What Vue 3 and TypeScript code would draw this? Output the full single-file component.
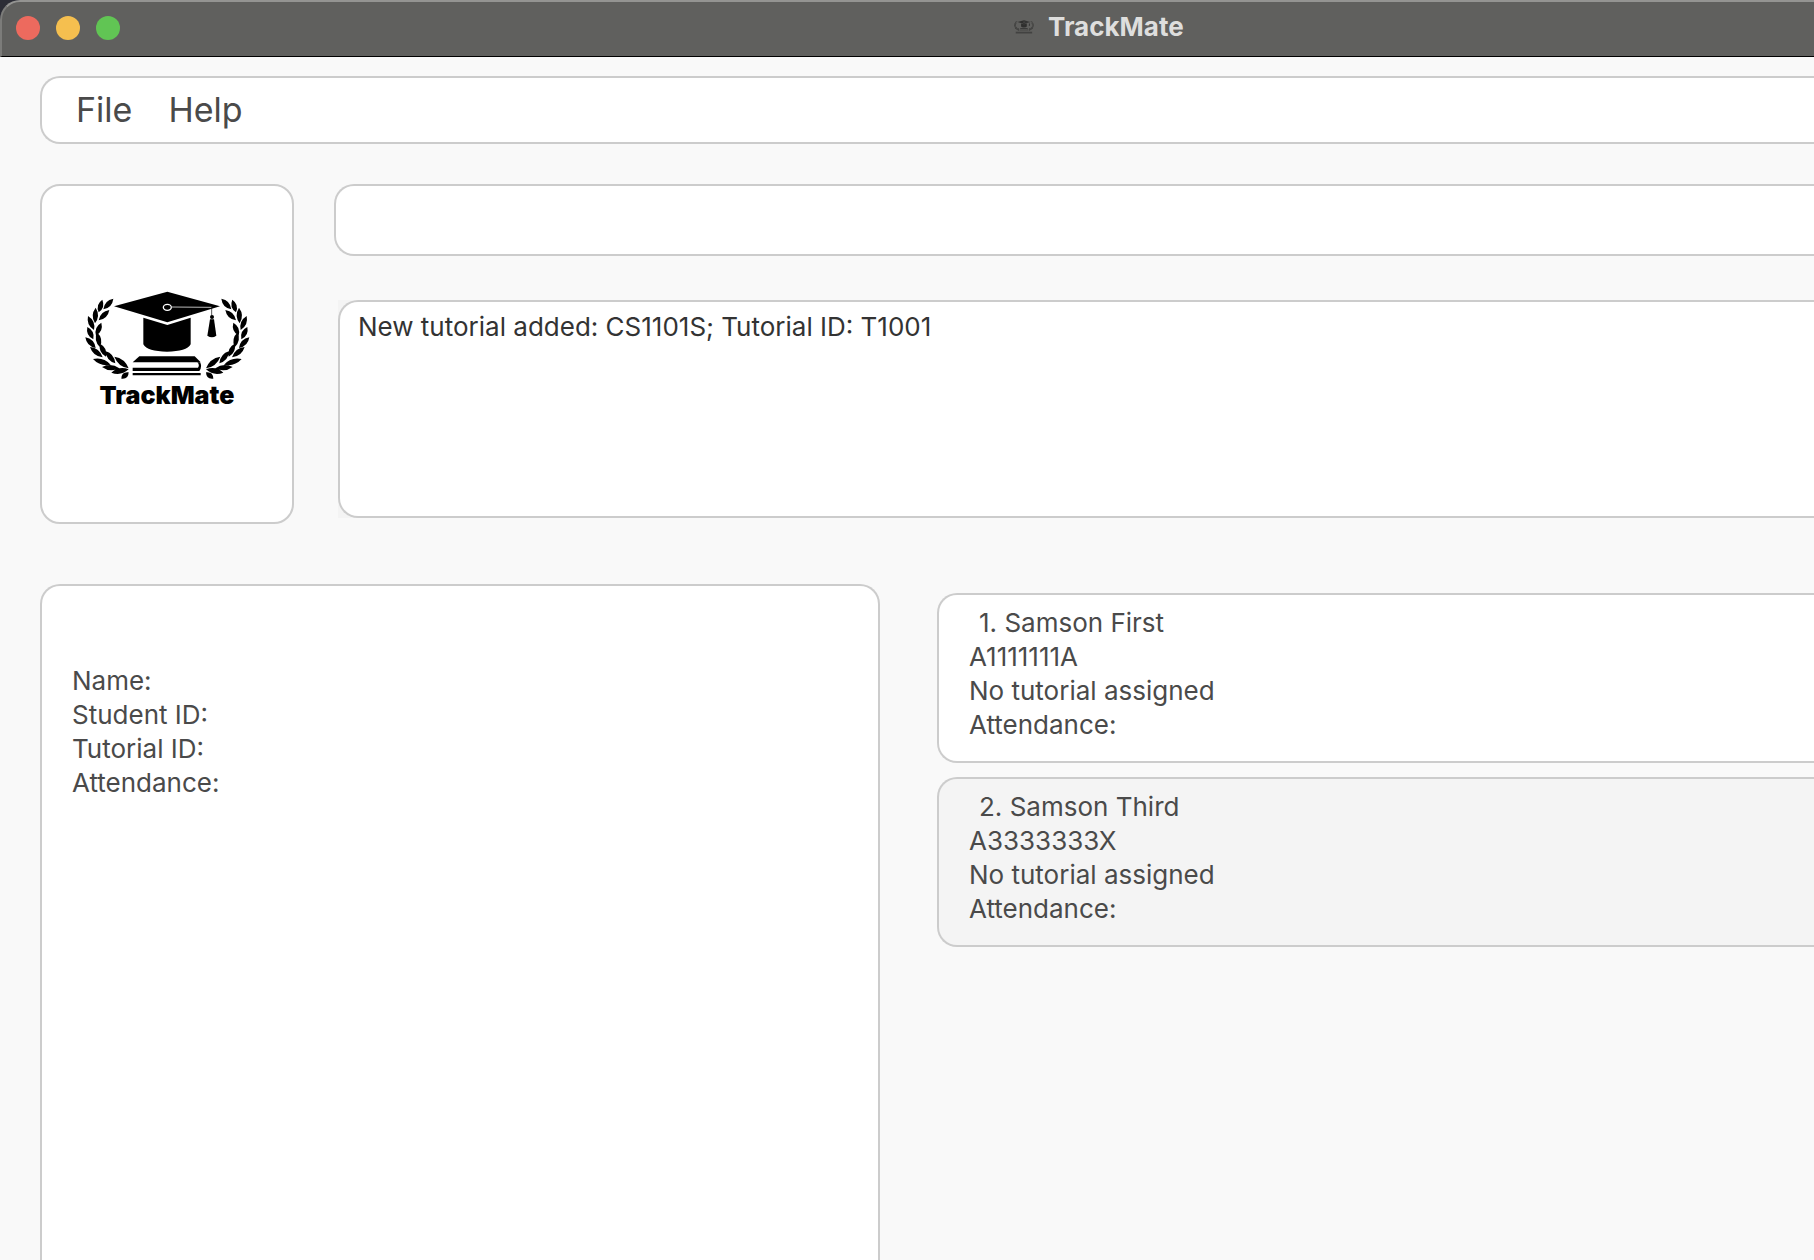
<script setup lang="ts">
import { ref } from 'vue'

interface Student {
  name: string
  studentId: string
  tutorial: string
  attendance: string
}

type Leaf = [number, number, number, number]

const command = ref('')
const result = ref('New tutorial added: CS1101S; Tutorial ID: T1001')

const menus = ['File', 'Help']
const fields = ['Name:', 'Student ID:', 'Tutorial ID:', 'Attendance:']

const students: Student[] = [
  { name: 'Samson First', studentId: 'A1111111A', tutorial: 'No tutorial assigned', attendance: '' },
  { name: 'Samson Third', studentId: 'A3333333X', tutorial: 'No tutorial assigned', attendance: '' },
]

// Laurel leaves, each given by its two tips
const leaves: Leaf[] = [
  [100, 121, 130, 89],
  [86, 130, 97, 92],
  [86, 154, 118, 123],
  [75, 163, 77, 116],
  [72, 183, 54, 141],
  [78, 200, 94, 161],
  [70, 211, 52, 174],
  [90, 235, 81, 190],
  [77, 237, 46, 205],
  [108, 263, 90, 224],
  [98, 265, 60, 234],
  [136, 283, 106, 246],
  [122, 287, 69, 270],
  [176, 298, 133, 263],
  [148, 298, 96, 294],
  [176, 301, 124, 311],
  [154, 329, 176, 310],
]

const leafPath = ([x1, y1, x2, y2]: Leaf): string => {
  const len = Math.hypot(x2 - x1, y2 - y1)
  const px = (-(y2 - y1) / len) * 16
  const py = ((x2 - x1) / len) * 16
  const mx = (x1 + x2) / 2
  const my = (y1 + y2) / 2
  return `M${x1} ${y1}Q${mx + px} ${my + py} ${x2} ${y2}Q${mx - px} ${my - py} ${x1} ${y1}Z`
}

const laurel = leaves.map(leafPath).join('')
</script>

<template>
  <div class="window">
    <svg class="defs" aria-hidden="true">
      <defs>
        <g id="trackmate-emblem">
          <path :d="laurel" />
          <path :d="laurel" transform="translate(584 0) scale(-1 1)" />
          <path d="M132 112 292 68 450 112 292 160Z" />
          <path d="M220 146 292 168 362 146V226Q350 248 291 248 232 248 220 226Z" />
          <ellipse class="ring" cx="292" cy="115" rx="12" ry="9" />
          <path class="cord" d="M304 114 425 115" />
          <path class="string" d="M425 114V140" />
          <circle cx="426" cy="144" r="6" />
          <path d="M420 151H432L439 200Q426 210 412 200Z" />
          <path d="M188 280 208 262H374L392 280Z" />
          <path d="M188 296H384Q390 288 382 280H390Q398 292 388 306H188Z" />
          <path d="M188 312H392V319H188Z" />
        </g>
      </defs>
    </svg>

    <header class="titlebar">
      <div class="lights">
        <button class="light close" type="button" aria-label="Close"></button>
        <button class="light minimise" type="button" aria-label="Minimise"></button>
        <button class="light zoom" type="button" aria-label="Zoom"></button>
      </div>
      <div class="title">
        <svg class="title-icon" viewBox="45 66 495 339" aria-hidden="true">
          <use href="#trackmate-emblem" />
          <path d="M88 352H494V396H88Z" opacity="0.6" />
        </svg>
        <h1>TrackMate</h1>
      </div>
    </header>

    <main class="content">
      <nav class="menu open-right">
        <button v-for="menu in menus" :key="menu" type="button">{{ menu }}</button>
      </nav>

      <section class="top">
        <div class="logo-box">
          <svg class="logo" viewBox="45 66 495 267" aria-hidden="true">
            <use href="#trackmate-emblem" />
          </svg>
          <span class="wordmark">TrackMate</span>
        </div>
        <div class="console">
          <input v-model="command" class="command open-right" type="text" aria-label="Command" />
          <div class="result-holder">
            <textarea v-model="result" class="result open-right" readonly aria-label="Result"></textarea>
          </div>
        </div>
      </section>

      <section class="bottom">
        <div class="details">
          <p v-for="field in fields" :key="field">{{ field }}</p>
        </div>
        <ul class="students">
          <li v-for="(student, i) in students" :key="student.studentId" class="student open-right">
            <p class="name">{{ i + 1 }}. {{ student.name }}</p>
            <p>{{ student.studentId }}</p>
            <p>{{ student.tutorial }}</p>
            <p>Attendance: {{ student.attendance }}</p>
          </li>
        </ul>
      </section>
    </main>
  </div>
</template>

<style>
body {
  margin: 0;
  background: #2c2d36;
}
</style>

<style scoped>
.window {
  display: flex;
  flex-direction: column;
  min-height: 100vh;
  font-family: Inter, "Liberation Sans", sans-serif;
  font-size: 26px;
  line-height: 34px;
  color: #4a4a4a;
}

.window * {
  box-sizing: border-box;
}

.defs {
  position: absolute;
  width: 0;
  height: 0;
}

.ring {
  fill: #000;
  stroke: #fff;
  stroke-width: 4;
}

.cord {
  fill: none;
  stroke: #bbb;
  stroke-width: 3;
}

.string {
  fill: none;
  stroke: #000;
  stroke-width: 2;
}

.titlebar {
  display: grid;
  grid-template-columns: 1012fr 800fr;
  height: 57px;
  border-top: 2px solid #949492;
  border-left: 2px solid #7c7c7a;
  border-bottom: 1px solid #000;
  border-top-left-radius: 20px;
  background: #60605e;
}

.lights {
  display: flex;
  gap: 16px;
  padding: 14px;
}

.light {
  width: 24px;
  height: 24px;
  padding: 0;
  border: 0;
  border-radius: 50%;
}

.close {
  background: #ed6a5e;
}

.minimise {
  background: #f5bf4f;
}

.zoom {
  background: #61c554;
}

.title {
  display: flex;
  align-items: center;
  gap: 14px;
  padding-bottom: 4px;
}

.title-icon {
  width: 20px;
  height: 14px;
  opacity: 0.5;
}

h1 {
  margin: 0;
  font-size: 26px;
  font-weight: 700;
  color: #dededd;
}

.content {
  display: flex;
  flex: 1;
  flex-direction: column;
  padding: 19px 0 0 40px;
  background: #f9f9f9;
}

.menu,
.logo-box,
.command,
.result,
.details,
.student {
  border: 2px solid #ccc;
  border-radius: 20px;
  background: #fff;
}

.open-right {
  border-right: 0;
  border-top-right-radius: 0;
  border-bottom-right-radius: 0;
}

.menu {
  display: flex;
  align-items: center;
  gap: 36px;
  height: 68px;
  padding: 0 34px;
}

.menu button {
  padding: 0;
  border: 0;
  background: none;
  font: inherit;
  font-size: 34px;
  color: inherit;
}

.top {
  display: flex;
  gap: 40px;
  margin-top: 40px;
}

.logo-box {
  display: flex;
  flex: none;
  flex-direction: column;
  align-items: center;
  justify-content: center;
  width: 254px;
  height: 340px;
  padding-bottom: 8px;
}

.logo {
  width: 165px;
  height: 89px;
}

.wordmark {
  font-size: 25px;
  font-weight: 900;
  line-height: 30px;
  color: #000;
}

.console {
  display: flex;
  flex: 1;
  flex-direction: column;
  gap: 44px;
}

.command {
  width: 100%;
  height: 72px;
  padding: 0 18px;
  font: inherit;
  color: #333;
  outline: none;
}

.result-holder {
  display: flex;
  height: 218px;
  margin-left: 4px;
  background: #f4f4f4;
}

.result {
  flex: 1;
  padding: 8px 18px;
  font: inherit;
  color: #333;
  resize: none;
  outline: none;
}

.bottom {
  display: grid;
  flex: 1;
  grid-template-columns: 840fr 877fr;
  gap: 57px;
  margin-top: 60px;
}

.details {
  padding: 78px 30px;
  border-bottom: 0;
  border-bottom-left-radius: 0;
  border-bottom-right-radius: 0;
}

p {
  margin: 0;
}

.students {
  display: flex;
  flex-direction: column;
  gap: 14px;
  margin: 0;
  padding: 9px 0 0;
  list-style: none;
}

.student {
  padding: 11px 30px 19px;
}

.student:nth-child(even) {
  background: #f4f4f4;
}

.name {
  padding-left: 10px;
}
</style>
